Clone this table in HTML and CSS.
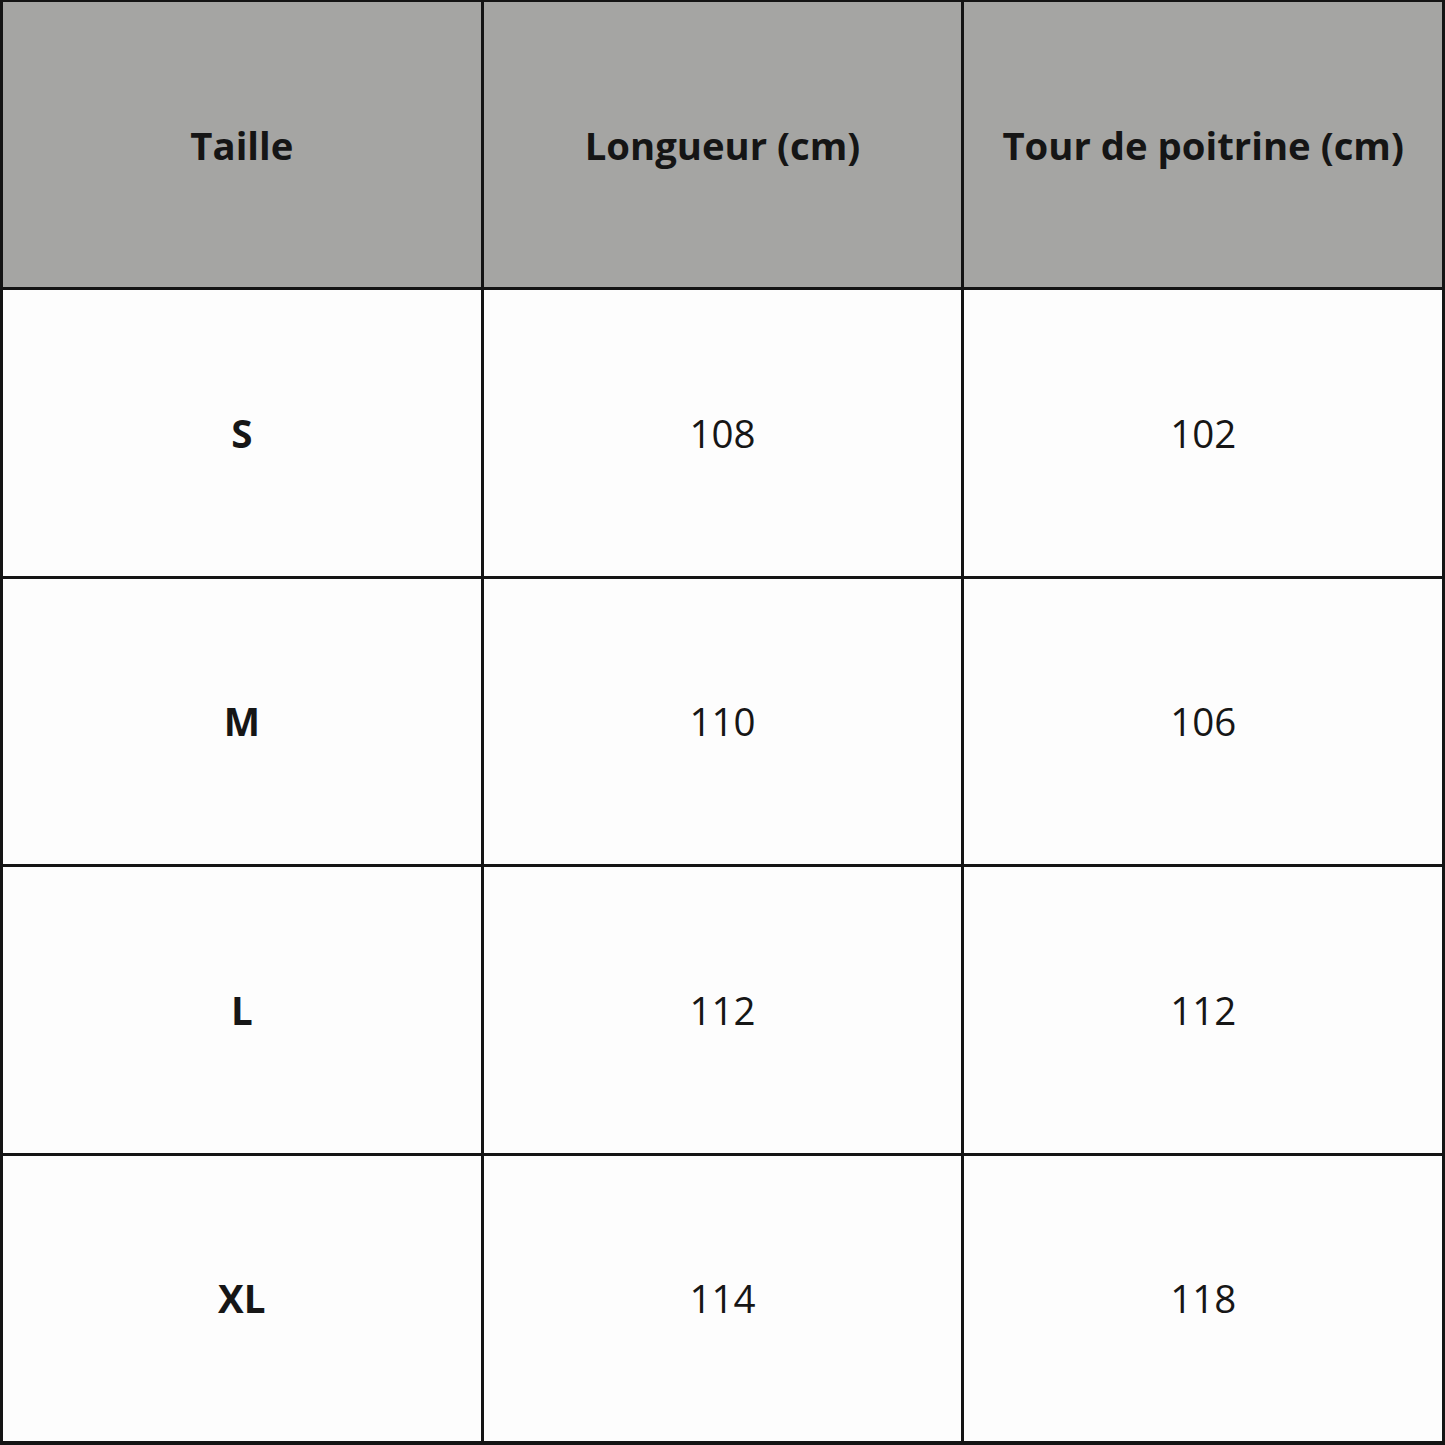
FILE: index.html
```html
<!DOCTYPE html>
<html lang="fr">
<head>
<meta charset="utf-8">
<title>Guide des tailles</title>
<link rel="stylesheet" href="styles.css">
</head>
<body>
<div class="table">
  <div class="cell head">Taille</div>
  <div class="cell head">Longueur (cm)</div>
  <div class="cell head">Tour de poitrine (cm)</div>

  <div class="cell size">S</div>
  <div class="cell">108</div>
  <div class="cell">102</div>

  <div class="cell size">M</div>
  <div class="cell">110</div>
  <div class="cell">106</div>

  <div class="cell size">L</div>
  <div class="cell">112</div>
  <div class="cell">112</div>

  <div class="cell size">XL</div>
  <div class="cell">114</div>
  <div class="cell">118</div>
</div>
</body>
</html>
```
FILE: styles.css
```css
html, body {
  margin: 0;
  padding: 0;
  background: #111111;
}
.table {
  width: 1445px;
  height: 1445px;
  box-sizing: border-box;
  display: grid;
  grid-template-columns: repeat(3, 1fr);
  grid-template-rows: repeat(5, 1fr);
  gap: 3px;
  padding: 2px 3px 4px 3px;
  background: #141414;
  font-family: "Open Sans", "Liberation Sans", sans-serif;
}
.cell {
  display: flex;
  align-items: center;
  justify-content: center;
  background: #fdfdfd;
  color: #161616;
  font-size: 38.5px;
  font-weight: 400;
}
.head {
  background: #a5a5a3;
  font-weight: 700;
  color: #151515;
  font-size: 38.3px;
}
.size {
  font-weight: 700;
}
```
